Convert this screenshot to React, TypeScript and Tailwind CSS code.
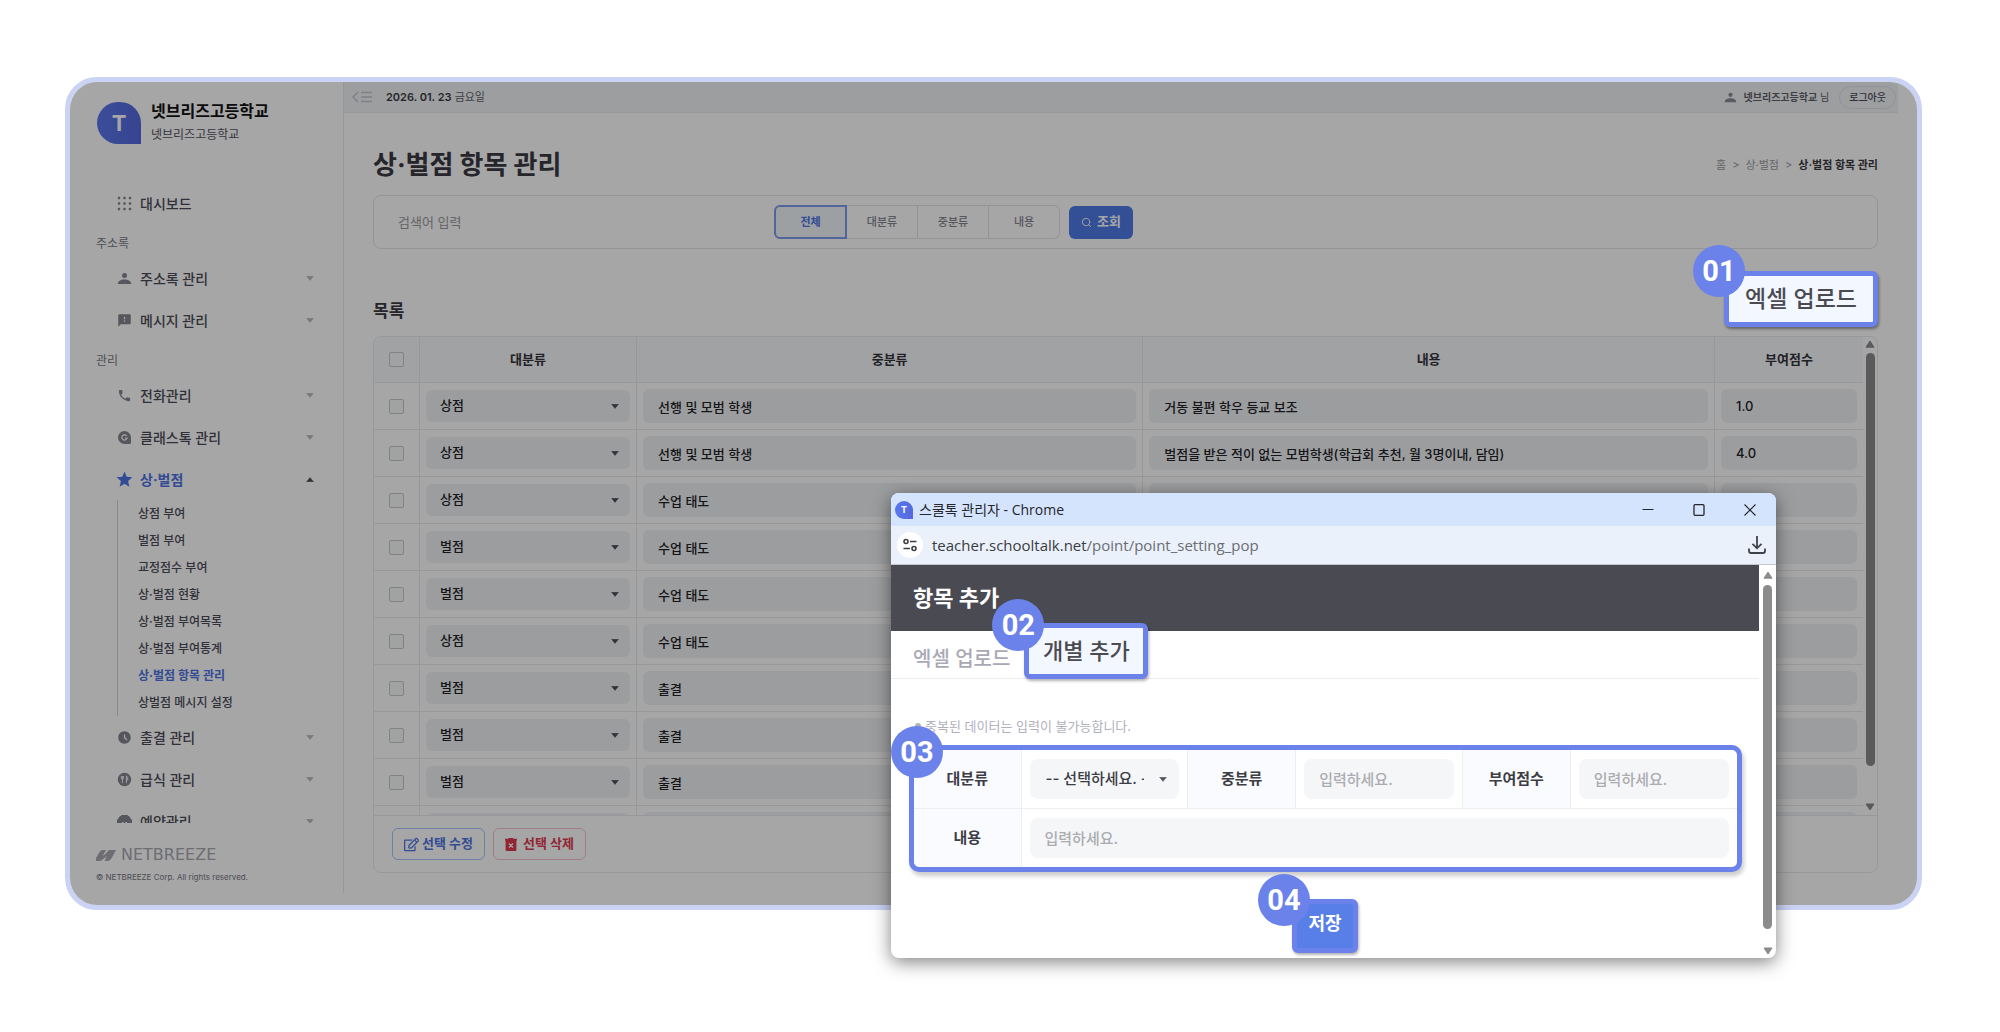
import type { ReactNode } from "react";
import { MdAccessTimeFilled, MdPhone, MdSmsFailed, MdStar } from "react-icons/md";
import { FiSearch } from "react-icons/fi";
import { FaRegEdit } from "react-icons/fa";

interface MenuItem {
  label: string;
  icon: ReactNode;
  open?: boolean;
  leaf?: boolean;
  children?: string[];
}

interface MenuGroup {
  title?: string;
  items: MenuItem[];
}

interface PointRow {
  type: string;
  category: string;
  content: string;
  score: string;
}

const ICON = "size-[15px] shrink-0";

const MENU: MenuGroup[] = [
  { items: [{ label: "대시보드", icon: <DotsIcon />, leaf: true }] },
  {
    title: "주소록",
    items: [
      { label: "주소록 관리", icon: <PersonIcon className={ICON} /> },
      { label: "메시지 관리", icon: <MdSmsFailed className={ICON} /> },
    ],
  },
  {
    title: "관리",
    items: [
      { label: "전화관리", icon: <MdPhone className={ICON} /> },
      { label: "클래스톡 관리", icon: <ClassTalkIcon /> },
      {
        label: "상·벌점",
        icon: <MdStar className="-m-[2px] size-[19px] shrink-0" />,
        open: true,
        children: [
          "상점 부여",
          "벌점 부여",
          "교정점수 부여",
          "상·벌점 현황",
          "상·벌점 부여목록",
          "상·벌점 부여통계",
          "상·벌점 항목 관리",
          "상벌점 메시지 설정",
        ],
      },
      { label: "출결 관리", icon: <MdAccessTimeFilled className={ICON} /> },
      { label: "급식 관리", icon: <MealIcon /> },
      { label: "예약관리", icon: <BookingIcon /> },
    ],
  },
];

const ACTIVE_SUB = "상·벌점 항목 관리";

const ROWS: PointRow[] = [
  { type: "상점", category: "선행 및 모범 학생", content: "거동 불편 학우 등교 보조", score: "1.0" },
  {
    type: "상점",
    category: "선행 및 모범 학생",
    content: "벌점을 받은 적이 없는 모범학생(학급회 추천, 월 3명이내, 담임)",
    score: "4.0",
  },
  { type: "상점", category: "수업 태도", content: "", score: "" },
  { type: "벌점", category: "수업 태도", content: "", score: "" },
  { type: "벌점", category: "수업 태도", content: "", score: "" },
  { type: "상점", category: "수업 태도", content: "", score: "" },
  { type: "벌점", category: "출결", content: "", score: "" },
  { type: "벌점", category: "출결", content: "", score: "" },
  { type: "벌점", category: "출결", content: "", score: "" },
  { type: "", category: "", content: "", score: "" },
];

const FILTERS = ["전체", "대분류", "중분류", "내용"];

function DotsIcon() {
  return (
    <svg viewBox="0 0 15 15" className={ICON} fill="currentColor" aria-hidden="true">
      {[2, 7.5, 13].map((y) =>
        [2, 7.5, 13].map((x) => <rect key={`${x}-${y}`} x={x - 1.2} y={y - 1.2} width="2.4" height="2.4" rx="0.6" />),
      )}
    </svg>
  );
}

function PersonIcon({ className }: { className?: string }) {
  return (
    <svg viewBox="0 0 15 15" className={className} fill="currentColor" aria-hidden="true">
      <circle cx="7.5" cy="4.4" r="2.5" />
      <path d="M.8 13c0-3 2.900-4.600 6.700-4.600S14.200 10 14.200 13Z" />
    </svg>
  );
}

function ClassTalkIcon() {
  return (
    <svg viewBox="0 0 15 15" className={ICON} aria-hidden="true">
      <path d="M7.500 1a6.500 6.500 0 1 0 0 13h5a1.500 1.500 0 0 0 1.500-1.500v-5A6.500 6.500 0 0 0 7.500 1Z" fill="currentColor" />
      <path d="M9.600 5.900A2.600 2.600 0 1 0 10 8.100H8.200" fill="none" stroke="#fff" strokeWidth="1.2" />
    </svg>
  );
}

function MealIcon() {
  return (
    <svg viewBox="0 0 15 15" className={ICON} aria-hidden="true">
      <circle cx="7.5" cy="7.5" r="6.7" fill="currentColor" />
      <path
        d="M4.400 4v2.200a1 1 0 0 0 2 0V4M5.400 4v7.200M9.400 11.200V4c1.200.5 1.600 2 1.200 4H9.400"
        fill="none"
        stroke="#fff"
        strokeWidth="0.9"
      />
    </svg>
  );
}

function BookingIcon() {
  return (
    <svg viewBox="0 0 15 15" className={ICON} aria-hidden="true">
      <path
        d="M3 2.500h1.500V1.500h6v1H12L13.500 5 14.500 6v7.500h-3V12h-8v1.500h-3V6l1-1Z"
        fill="currentColor"
        stroke="currentColor"
        strokeLinejoin="round"
      />
      <path d="M5 8.500h1.500M8.500 8.500H10" stroke="#fff" />
    </svg>
  );
}

function Caret({ up, className }: { up?: boolean; className?: string }) {
  return (
    <svg viewBox="0 0 8 5" className={`h-[5px] w-2 shrink-0 ${className ?? ""}`} aria-hidden="true">
      <path
        d={up ? "M.6 4.700 4 .6l3.400 4.100Z" : "M.6.3 4 4.400 7.400.3Z"}
        fill="currentColor"
        stroke="currentColor"
        strokeWidth="0.5"
        strokeLinejoin="round"
      />
    </svg>
  );
}

function TalkLogo({ className, textClass }: { className: string; textClass: string }) {
  return (
    <span
      className={`flex shrink-0 items-center justify-center bg-linear-to-r from-[#5b77ee] to-[#5568dd] font-bold text-white ${className}`}
    >
      <span className={textClass}>T</span>
    </span>
  );
}

function StepBadge({ children, className }: { children: ReactNode; className: string }) {
  return (
    <span
      className={`absolute z-10 flex size-[52px] items-center justify-center rounded-full bg-[#6b82ea] font-['Roboto',sans-serif] text-[29px] leading-none font-bold text-white ${className}`}
    >
      {children}
    </span>
  );
}

function ScrollRail({ thumbClass, className }: { thumbClass: string; className: string }) {
  return (
    <div className={`flex shrink-0 flex-col items-center ${className}`} aria-hidden="true">
      <svg viewBox="0 0 10 8" className="h-2 w-[10px] shrink-0">
        <path d="M1 7.200 5 1l4 6.200Z" fill="currentColor" stroke="currentColor" strokeLinejoin="round" />
      </svg>
      <div className={`w-[9px] rounded-full bg-current ${thumbClass}`} />
      <svg viewBox="0 0 10 8" className="mt-auto h-2 w-[10px] shrink-0">
        <path d="M1 1 5 7l4-6Z" fill="currentColor" stroke="currentColor" strokeLinejoin="round" />
      </svg>
    </div>
  );
}

function Sidebar() {
  return (
    <aside className="mb-3 flex w-[274px] shrink-0 flex-col border-r border-[#e6e6ea]">
      <div className="mb-[36px] flex items-start gap-[10px] pt-[20px] pl-[27px]">
        <TalkLogo className="h-[42px] w-[44px] rounded-full rounded-br-[8px]" textClass="text-[22px]" />
        <div className="-mt-[2px]">
          <p className="text-[16px] leading-[23px] font-bold text-[#111]">넷브리즈고등학교</p>
          <p className="text-[12px] leading-[23px] text-[#55555f]">넷브리즈고등학교</p>
        </div>
      </div>

      <nav className="h-0 grow overflow-hidden text-[#4c4c58]">
        {MENU.map((group, i) => (
          <div key={group.title ?? i}>
            {group.title && (
              <p className="h-[33px] pt-[9px] pl-[26px] text-[12px] leading-[22px] text-[#7b7b88]">{group.title}</p>
            )}
            <ul>
              {group.items.map((item) => (
                <li key={item.label}>
                  <a
                    href="#"
                    className={`flex h-[42px] items-center pr-[29px] pl-[47px] text-[14px] ${
                      item.open ? "font-bold text-[#4f74e3]" : "font-medium"
                    }`}
                  >
                    <span className={item.open ? "" : "text-[#85858f]"}>{item.icon}</span>
                    <span className="ml-2">{item.label}</span>
                    {!item.leaf && (
                      <Caret up={item.open} className={`ml-auto ${item.open ? "text-[#4c4c58]" : "text-[#b8b8c0]"}`} />
                    )}
                  </a>
                  {item.children && (
                    <ul className="ml-[47px] border-l border-[#d4d4da]">
                      {item.children.map((sub) => (
                        <li key={sub}>
                          <a
                            href="#"
                            className={`flex h-[27px] items-center pt-px pl-[20px] text-[12px] ${
                              sub === ACTIVE_SUB ? "font-bold text-[#4f74e3]" : "font-medium"
                            }`}
                          >
                            {sub}
                          </a>
                        </li>
                      ))}
                    </ul>
                  )}
                </li>
              ))}
            </ul>
          </div>
        ))}
      </nav>

      <div className="pt-[23px] pb-[7px] pl-[26px] text-[#a8a8b0]">
        <div className="flex items-center gap-[5px]">
          <svg viewBox="0 0 20 11" className="h-[11px] w-5" fill="currentColor" aria-hidden="true">
            <path d="M0 11V8l3-5C4 1.200 5 0 7 0h3L6.500 6 10 3.500 12 1c.6-.7 1.300-1 2.500-1H20l-4 7.500C14.600 10 13.500 11 11 11H8.500L11 6 6 10c-.8.700-1.500 1-3 1H0Z" />
          </svg>
          <span className="font-['DejaVu_Sans',sans-serif] text-[16px] leading-[18px]">NETBREEZE</span>
        </div>
        <p className="mt-[4px] text-[8px] leading-[18px] text-[#777782]">© NETBREEZE Corp. All rights reserved.</p>
      </div>
    </aside>
  );
}

function TopBar() {
  return (
    <header className="mr-[19px] flex h-[31px] items-center border-b border-[#e8eaee] bg-[#f0f3f6] pr-[2px] pl-2">
      <button type="button" aria-label="메뉴 접기" className="text-[#c3c5cc]">
        <svg viewBox="0 0 20 12" className="h-3 w-5" fill="none" stroke="currentColor" strokeWidth="1.4">
          <path d="M6 1 1 6l5 5M9 1.500h11M9 6h11M9 10.500h11" />
        </svg>
      </button>
      <p className="ml-[14px] text-[11px] text-[#5f5f68]">
        <strong className="font-semibold text-[#3a3a42]">2026. 01. 23</strong> 금요일
      </p>
      <p className="ml-auto flex items-center gap-[7px] text-[10px] text-[#5f5f68]">
        <PersonIcon className="size-[13px] text-[#8b8b95]" />
        <span>
          <strong className="font-bold">넷브리즈고등학교</strong> 님
        </span>
      </p>
      <button
        type="button"
        className="ml-[10px] h-[23px] rounded-full border border-[#dfe1e6] px-[9px] text-[10px] font-medium text-[#4c4c58]"
      >
        로그아웃
      </button>
    </header>
  );
}

function SearchBar() {
  return (
    <form className="flex h-[54px] items-center rounded-lg border border-[#e3e4ea] pl-[24px]">
      <input
        type="text"
        aria-label="검색어"
        placeholder="검색어 입력"
        className="h-[34px] w-[376px] bg-transparent text-[13px] outline-none placeholder:text-[#9a9aa0]"
      />
      <div className="flex text-[11px] font-medium text-[#85858f]">
        {FILTERS.map((filter, i) => (
          <button
            key={filter}
            type="button"
            className={
              i === 0
                ? "h-[34px] w-[73px] rounded-l-md border-2 border-[#7d9bee] bg-[#f2f6fb] font-bold text-[#4f74e3]"
                : "h-[34px] w-[71px] border-y border-r border-[#e3e4ea] last:rounded-r-md"
            }
          >
            {filter}
          </button>
        ))}
      </div>
      <button
        type="submit"
        className="ml-[9px] flex h-[33px] w-[64px] items-center justify-center gap-[5px] rounded-md bg-[#4f7be8] text-[13px] font-bold text-white"
      >
        <FiSearch className="size-[11px]" />
        조회
      </button>
    </form>
  );
}

function PointTable() {
  const cell = "border-b border-[#e8eaee] p-0 px-[6px]";
  const field = "block h-[34px] w-full rounded-md bg-[#eff2f5] px-[15px] outline-none";
  const box = "block mx-auto size-[15px] appearance-none rounded-[2px] border border-[#c5c8cc] bg-[#f8fafb]";

  return (
    <div className="rounded-lg border border-[#e8eaee]">
      <div className="flex max-h-[478px] overflow-hidden">
        <table className="w-full table-fixed border-separate border-spacing-0 text-[13px] font-medium text-[#222226]">
          <thead>
            <tr className="h-[46px] bg-[#f7f9fc] text-[#33333a]">
              <th className="w-[46px] rounded-tl-lg border-r border-b border-[#e8eaee] p-0">
                <input type="checkbox" aria-label="전체 선택" className={box} />
              </th>
              <th className="w-[217px] border-r border-b border-[#e8eaee]">대분류</th>
              <th className="w-[34%] border-r border-b border-[#e8eaee]">중분류</th>
              <th className="border-r border-b border-[#e8eaee]">내용</th>
              <th className="w-[148px] border-b border-[#e8eaee]">부여점수</th>
            </tr>
          </thead>
          <tbody>
            {ROWS.map((row, i) => (
              <tr key={i} className="h-[47px]">
                <td className="border-r border-b border-[#e8eaee] p-0">
                  <input type="checkbox" aria-label={`${i + 1}행 선택`} className={box} />
                </td>
                <td className={`border-r ${cell}`}>
                  <div className="relative">
                    <select
                      aria-label="대분류"
                      defaultValue={row.type}
                      className="block h-8 w-full appearance-none rounded-md bg-[#eff2f5] px-[14px] outline-none"
                    >
                      <option>{row.type}</option>
                    </select>
                    <Caret className="pointer-events-none absolute top-[14px] right-[11px] text-[#4c4c58]" />
                  </div>
                </td>
                <td className={`border-r ${cell}`}>
                  <input type="text" aria-label="중분류" defaultValue={row.category} className={field} />
                </td>
                <td className={`border-r ${cell}`}>
                  <input type="text" aria-label="내용" defaultValue={row.content} className={field} />
                </td>
                <td className={cell}>
                  <input type="text" aria-label="부여점수" defaultValue={row.score} className={field} />
                </td>
              </tr>
            ))}
          </tbody>
        </table>
        <ScrollRail className="h-[478px] w-[14px] pt-[3px] pb-[4px] text-[#8a8a8a]" thumbClass="mt-[5px] h-[413px]" />
      </div>
      <div className="flex gap-2 border-t border-[#e8eaee] px-[18px] py-3 text-[13px] font-bold">
        <button
          type="button"
          className="flex h-8 items-center gap-[3px] rounded-md border border-[#a9c2f7] px-[11px] text-[#4f74e3]"
        >
          <FaRegEdit className="size-[15px]" />
          선택 수정
        </button>
        <button
          type="button"
          className="flex h-8 items-center gap-[6px] rounded-md border border-[#f5c3cb] px-[11px] text-[#e03a50]"
        >
          <svg viewBox="0 0 12 13" className="h-[13px] w-3" aria-hidden="true">
            <path d="M0 .8h3.200L4 0h4l.8.8H12v1.700h-.6V12a1 1 0 0 1-1 1H1.600a1 1 0 0 1-1-1V2.500H0Z" fill="currentColor" />
            <path d="m4 5.500 4 4m0-4-4 4" stroke="#fff" strokeWidth="1.2" />
          </svg>
          선택 삭제
        </button>
      </div>
    </div>
  );
}

function WindowChrome() {
  return (
    <>
      <div className="flex h-[33px] items-center rounded-t-lg bg-[#d4e4fd] pl-1 text-[#24262b]">
        <TalkLogo className="size-[18px] rounded-full rounded-br-[3px]" textClass="text-[9px]" />
        <p className="ml-[6px] font-['Open_Sans','Noto_Sans_CJK_KR',sans-serif] text-[14px]">스쿨톡 관리자 - Chrome</p>
        <div className="ml-auto flex gap-[39px] pr-[20px]">
          <button type="button" aria-label="최소화">
            <svg viewBox="0 0 12 12" className="size-3" stroke="currentColor">
              <path d="M.5 5.500h11" />
            </svg>
          </button>
          <button type="button" aria-label="최대화">
            <svg viewBox="0 0 12 12" className="size-3" fill="none" stroke="currentColor" strokeWidth="1.3">
              <rect x="1" y=".7" width="10" height="10.600" rx="1" />
            </svg>
          </button>
          <button type="button" aria-label="닫기">
            <svg viewBox="0 0 12 12" className="size-3" stroke="currentColor" strokeWidth="1.1">
              <path d="m.5.5 11 11m0-11-11 11" />
            </svg>
          </button>
        </div>
      </div>
      <div className="flex h-[39px] items-center border-b border-[#c4c8cf] bg-[#ebf1fa] pr-[10px] pl-[6px]">
        <span className="flex size-[26px] items-center justify-center rounded-full bg-white text-[#3a3d42]">
          <svg viewBox="0 0 14 14" className="size-[14px]" fill="none" stroke="currentColor" strokeWidth="1.6">
            <circle cx="3" cy="3.500" r="2" />
            <circle cx="11" cy="10.500" r="2" />
            <path d="M7 3.500h6.500M.5 10.500H7" />
          </svg>
        </span>
        <p className="ml-[9px] font-['Open_Sans',sans-serif] text-[15px] text-[#6a6d73]">
          <span className="text-[#3a3d42]">teacher.schooltalk.net</span>/point/point_setting_pop
        </p>
        <svg
          viewBox="0 0 18 18"
          className="ml-auto size-[18px] text-[#3f4247]"
          fill="none"
          stroke="currentColor"
          strokeWidth="1.8"
          aria-hidden="true"
        >
          <path d="M9 0v12M4.500 7.800 9 12.300l4.500-4.500M1 12.500V15a2 2 0 0 0 2 2h12a2 2 0 0 0 2-2v-2.500" />
        </svg>
      </div>
    </>
  );
}

function AddForm() {
  const th = "bg-[#f9fbff] border-r border-[#eceef2] p-0 font-bold";
  const td = "px-2 py-[9px]";
  const field = "block h-10 w-full rounded-lg bg-[#f4f6f8] px-[15px] font-medium outline-none placeholder:text-[#acacb0]";

  return (
    <div className="relative mr-[17px] ml-[18px] rounded-[10px] border-[5px] border-[#6b82ea] bg-white shadow-[2px_4px_4px_rgba(0,0,0,0.2)]">
      <StepBadge className="top-[-24px] left-[-23px]">03</StepBadge>
      <table className="w-full table-fixed border-collapse text-[15px] text-[#3d3d45]">
        <tbody>
          <tr className="border-b border-[#eceef2]">
            <th className={`w-[107px] rounded-tl-md ${th}`}>
              <label htmlFor="main-category">대분류</label>
            </th>
            <td className={`border-r border-[#eceef2] ${td}`}>
              <div className="relative">
                <select
                  id="main-category"
                  className="block h-10 w-full appearance-none rounded-lg bg-[#f4f6f8] pr-[35px] pl-[16px] font-medium outline-none"
                >
                  <option>-- 선택하세요. --</option>
                </select>
                <Caret className="pointer-events-none absolute top-[18px] right-[12px] text-[#55555f]" />
              </div>
            </td>
            <th className={`w-[108px] ${th}`}>
              <label htmlFor="sub-category">중분류</label>
            </th>
            <td className={`border-r border-[#eceef2] ${td}`}>
              <input id="sub-category" type="text" placeholder="입력하세요." className={field} />
            </td>
            <th className={`w-[108px] ${th}`}>
              <label htmlFor="score">부여점수</label>
            </th>
            <td className={td}>
              <input id="score" type="text" placeholder="입력하세요." className={field} />
            </td>
          </tr>
          <tr>
            <th className={`rounded-bl-md ${th}`}>
              <label htmlFor="content">내용</label>
            </th>
            <td colSpan={5} className={td}>
              <input id="content" type="text" placeholder="입력하세요." className={field} />
            </td>
          </tr>
        </tbody>
      </table>
    </div>
  );
}

function AddItemWindow() {
  return (
    <section
      aria-label="항목 추가"
      className="absolute top-[416px] right-[146px] z-30 w-[885px] rounded-lg bg-white shadow-[0_4px_18px_rgba(0,0,0,0.5)]"
    >
      <WindowChrome />
      <div className="flex">
        <div className="min-w-0 grow pb-[5px]">
          <h2 className="flex h-[66px] items-center bg-[#4a4a52] pl-[22px] text-[22px] font-bold text-white">항목 추가</h2>
          <div className="flex h-[48px] items-start border-b border-[#ececf0] pl-[22px]">
            <button type="button" className="mt-[12px] text-[20px] leading-[32px] font-medium text-[#a9a9b5]">
              엑셀 업로드
            </button>
            <div className="relative mt-[-8px] ml-[14px]">
              <StepBadge className="top-[-24px] left-[-32px]">02</StepBadge>
              <button
                type="button"
                className="block h-[56px] w-[124px] rounded-md border-[5px] border-[#6b82ea] bg-[#f3f7ff] text-[22px] leading-none font-medium text-[#4a4a50] shadow-[1px_2px_3px_rgba(0,0,0,0.3)]"
              >
                개별 추가
              </button>
            </div>
          </div>
          <p className="mt-[37px] mb-[9px] flex items-center gap-1 pl-[24px] text-[13px] leading-5 text-[#b1b1bd]">
            <span className="size-[6px] rounded-full bg-current" />
            중복된 데이터는 입력이 불가능합니다.
          </p>
          <AddForm />
          <div className="mt-[27px] flex justify-center">
            <div className="relative">
              <StepBadge className="top-[-25px] left-[-34px]">04</StepBadge>
              <button
                type="submit"
                className="block h-[54px] w-[66px] rounded-md border-[5px] border-[#6b82ea] bg-[#587ee8] pb-[4px] text-[18px] leading-none font-bold text-white shadow-[1px_2px_3px_rgba(0,0,0,0.3)]"
              >
                저장
              </button>
            </div>
          </div>
        </div>
        <ScrollRail className="w-[17px] pt-[6px] pb-[3px] text-[#8b8b8b]" thumbClass="mt-[6px] mb-[18px] grow" />
      </div>
    </section>
  );
}

export default function App() {
  return (
    <div className="min-h-screen bg-white pt-[77px] pr-[78px] pl-[65px] font-['Inter','Noto_Sans_CJK_KR',sans-serif]">
      <div className="relative">
        <div className="relative flex overflow-hidden rounded-[32px] border-[5px] border-[#cbd3f5] bg-white">
          <Sidebar />
          <main className="min-w-0 grow">
            <TopBar />
            <div className="pr-[39px] pb-8 pl-[29px]">
              <div className="mb-[11px] flex items-center justify-between pt-[33px]">
                <h1 className="text-[26px] leading-[38px] font-bold text-[#3a3a42]">상·벌점 항목 관리</h1>
                <nav aria-label="현재 위치" className="flex gap-[6px] text-[11px] text-[#9a9aa0]">
                  <a href="#">홈</a>
                  <span>&gt;</span>
                  <a href="#">상·벌점</a>
                  <span>&gt;</span>
                  <span className="font-bold text-[#3a3a42]">상·벌점 항목 관리</span>
                </nav>
              </div>
              <SearchBar />
              <div className="mt-[22px] mb-[9px] flex items-end justify-between">
                <h2 className="pb-[4px] text-[17px] leading-6 font-bold text-[#3a3a42]">목록</h2>
                <div className="relative z-20">
                  <StepBadge className="top-[-26px] left-[-31px]">01</StepBadge>
                  <button
                    type="button"
                    className="block h-[56px] w-[154px] rounded-md border-[5px] border-[#6b82ea] bg-[#f3f7ff] text-[23px] leading-none font-medium text-[#4a4a50] shadow-[1px_2px_3px_rgba(0,0,0,0.4)]"
                  >
                    엑셀 업로드
                  </button>
                </div>
              </div>
              <PointTable />
            </div>
          </main>
          <div className="pointer-events-none absolute inset-0 z-10 bg-black/35" />
        </div>
        <AddItemWindow />
      </div>
    </div>
  );
}
